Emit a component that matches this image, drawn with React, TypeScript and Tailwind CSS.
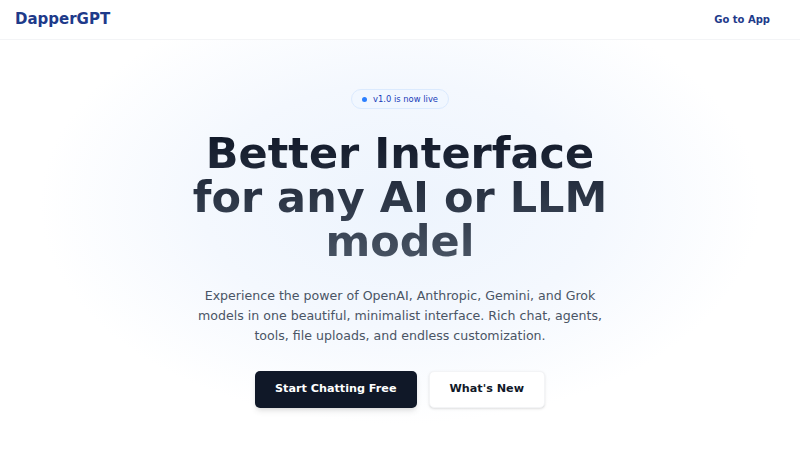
import React from "react";

export default function App() {
  return (
    <div
      className="min-h-screen w-full bg-white text-gray-900"
      style={{ fontFamily: '"DejaVu Sans", "Liberation Sans", sans-serif' }}
    >
      {/* Header */}
      <header className="h-[40px] px-[15px] flex items-center justify-between bg-white border-b border-gray-100">
        <span className="text-[15px] font-bold text-[#1e3a8a]">DapperGPT</span>
        <button className="mr-[15px] text-[10px] font-bold text-[#1e3a8a]">Go to App</button>
      </header>

      {/* Hero */}
      <main className="h-[410px] flex flex-col items-center bg-[radial-gradient(ellipse_360px_220px_at_50%_40%,#edf4fd_0%,#f4f8fe_55%,#ffffff_100%)]">
        <div className="mt-[49px] h-[20px] px-[10px] flex items-center gap-[6px] rounded-full border border-blue-100 bg-blue-50/70">
          <span className="w-[5px] h-[5px] rounded-full bg-blue-500" />
          <span className="text-[8.4px] text-blue-800">v1.0 is now live</span>
        </div>

        <h1 className="mt-[22px] text-center text-[43px] leading-[44px] font-bold bg-gradient-to-b from-gray-900 to-gray-600 bg-clip-text text-transparent">
          Better Interface
          <br />
          for any AI or LLM
          <br />
          model
        </h1>

        <p className="mt-[23px] max-w-[420px] text-center text-[12.6px] leading-[20px] text-gray-600">
          Experience the power of OpenAI, Anthropic, Gemini, and Grok models in one beautiful, minimalist interface. Rich chat, agents, tools, file uploads, and endless customization.
        </p>

        <div className="mt-[25px] flex items-center gap-[12px]">
          <button className="h-[37px] px-[20px] rounded-[5px] bg-gray-900 text-white text-[11.2px] font-bold shadow-md">
            Start Chatting Free
          </button>
          <button className="h-[37px] px-[20px] rounded-[5px] bg-white border border-gray-100 text-gray-900 text-[11.2px] font-bold shadow-sm">
            What's New
          </button>
        </div>
      </main>
    </div>
  );
}
